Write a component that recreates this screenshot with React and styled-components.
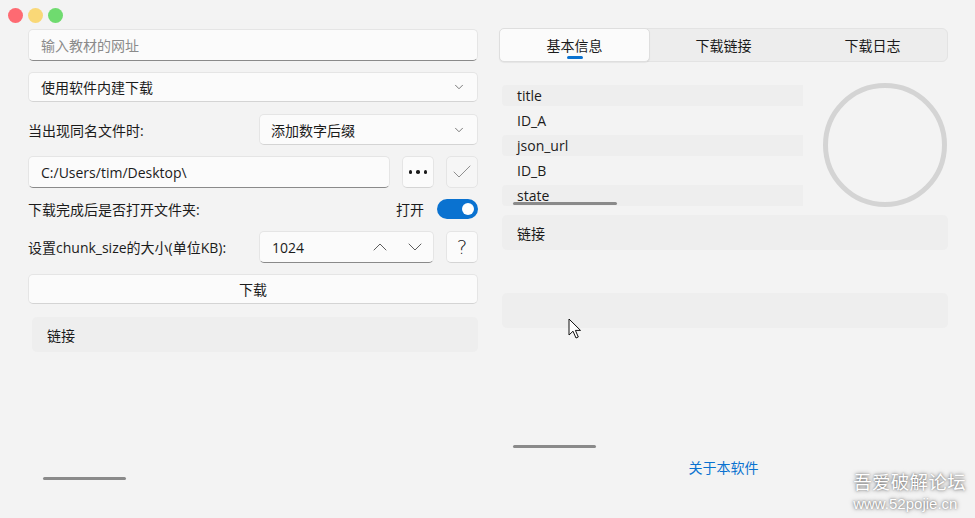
import React from 'react'
import styled, { createGlobalStyle } from 'styled-components'
import { ChevronDown, ChevronUp, Check } from 'lucide-react'

const Global = createGlobalStyle`
  html, body { margin: 0; padding: 0; background: #f3f3f3; }
  body { font-family: "Open Sans", "Noto Sans CJK SC", sans-serif; color: #1b1b1b; }
`;

const Window = styled.div`
  width: 975px;
  height: 518px;
  background: #f3f3f3;
  position: relative;
  overflow: hidden;
  display: flex;
  flex-direction: column;
  font-family: "Open Sans", "Noto Sans CJK SC", sans-serif;
  font-size: 14px;
`;

const TitleBar = styled.div`
  height: 28px;
  display: flex;
  gap: 5px;
  padding: 8px 0 0 8px;
  box-sizing: border-box;
`;

const Light = styled.span`
  width: 15px;
  height: 15px;
  border-radius: 50%;
  background: ${p => p.color};
`;

const Body = styled.div`
  display: flex;
  gap: 21px;
  padding-left: 28px;
`;

const LeftCol = styled.div`
  width: 450px;
  display: flex;
  flex-direction: column;
  padding-top: 1px;
`;

const RightCol = styled.div`
  width: 449px;
  display: flex;
  flex-direction: column;
`;

const Field = styled.div`
  height: ${p => p.h || 32}px;
  margin-top: ${p => p.mt || 0}px;
  flex: ${p => (p.grow ? 1 : 'none')};
  width: ${p => (p.w ? p.w + 'px' : 'auto')};
  box-sizing: border-box;
  background: #fbfbfb;
  border: 1px solid #e5e5e5;
  border-bottom-color: ${p => (p.edit ? '#8a8a8a' : '#d4d4d4')};
  border-radius: 5px;
  display: flex;
  align-items: center;
  padding: 0 ${p => p.pr ?? 12}px 0 ${p => p.pl ?? 12}px;
  color: ${p => (p.placeholder ? '#8b8b8b' : '#1b1b1b')};
`;

const Grow = styled.span`
  flex: 1;
`;

const Row = styled.div`
  display: flex;
  align-items: center;
  gap: ${p => p.gap || 0}px;
  height: ${p => p.h}px;
  margin-top: ${p => p.mt || 0}px;
`;

const Label = styled.span`
  flex: 1;
  white-space: nowrap;
`;

const SquareBtn = styled.div`
  width: 32px;
  height: 32px;
  box-sizing: border-box;
  background: ${p => (p.disabled ? '#f6f6f6' : '#fbfbfb')};
  border: 1px solid #e5e5e5;
  border-bottom-color: ${p => (p.disabled ? '#e5e5e5' : '#d4d4d4')};
  border-radius: 5px;
  display: flex;
  align-items: center;
  justify-content: center;
  font-size: 20px;
  font-family: "DejaVu Sans", sans-serif;
  font-weight: 200;
  color: ${p => (p.disabled ? '#8f8f8f' : '#1b1b1b')};
`;

const Dots = styled.span`
  display: flex;
  gap: 4px;
  & > i {
    width: 3.5px;
    height: 3.5px;
    border-radius: 50%;
    background: #1b1b1b;
  }
`;

const Toggle = styled.div`
  width: 41px;
  height: 20px;
  border-radius: 10px;
  background: #0a72d0;
  display: flex;
  align-items: center;
  justify-content: flex-end;
  padding-right: 4px;
  box-sizing: border-box;
  &::after {
    content: '';
    width: 12px;
    height: 12px;
    border-radius: 50%;
    background: #fff;
  }
`;

const Spin = styled.span`
  display: flex;
  gap: 11px;
  color: #5d5d5d;
  align-items: center;
`;

const Button = styled.div`
  height: 30px;
  margin-top: ${p => p.mt || 0}px;
  box-sizing: border-box;
  background: #fbfbfb;
  border: 1px solid #e5e5e5;
  border-bottom-color: #d4d4d4;
  border-radius: 5px;
  display: flex;
  align-items: center;
  justify-content: center;
`;

const Card = styled.div`
  height: 35px;
  margin: ${p => p.mt || 0}px 0 0 ${p => p.ml || 0}px;
  background: #eeeeee;
  border-radius: 5px;
  display: flex;
  align-items: center;
  padding-left: 15px;
`;

const ScrollLine = styled.div`
  width: ${p => p.w}px;
  height: 3px;
  border-radius: 2px;
  background: #8a8a8a;
  margin: ${p => p.mt}px 0 0 ${p => p.ml}px;
`;

const Tabs = styled.div`
  height: 34px;
  box-sizing: border-box;
  background: #ededed;
  border: 1px solid #e3e3e3;
  border-radius: 6px;
  display: flex;
`;

const Tab = styled.div`
  flex: 1;
  position: relative;
  display: flex;
  align-items: center;
  justify-content: center;
  border-radius: 5px;
  margin: -1px;
  background: ${p => (p.active ? '#fbfbfb' : 'transparent')};
  border: 1px solid ${p => (p.active ? '#dedede' : 'transparent')};
  box-shadow: ${p => (p.active ? '0 1px 1px rgba(0,0,0,0.06)' : 'none')};
  &::after {
    content: '';
    display: ${p => (p.active ? 'block' : 'none')};
    position: absolute;
    bottom: 2px;
    left: 50%;
    transform: translateX(-50%);
    width: 16px;
    height: 3px;
    border-radius: 2px;
    background: #0a72d0;
  }
`;

const InfoRow = styled.div`
  display: flex;
  gap: 20px;
  margin-top: 21px;
  padding-left: 3px;
`;

const Table = styled.div`
  width: 301px;
  margin-top: 2px;
  display: flex;
  flex-direction: column;
  gap: 4px;
  position: relative;
`;

const TRow = styled.div`
  height: 21px;
  border-radius: 4px 0 0 4px;
  background: ${p => (p.shade ? '#eeeeee' : 'transparent')};
  display: flex;
  align-items: center;
  padding-left: 15px;
`;

const HScroll = styled.div`
  position: absolute;
  left: 11px;
  bottom: 2px;
  width: 104px;
  height: 3px;
  border-radius: 2px;
  background: #8a8a8a;
`;

const Ring = styled.div`
  width: 124px;
  height: 124px;
  box-sizing: border-box;
  border-radius: 50%;
  border: 5px solid #d4d4d4;
`;

const About = styled.div`
  margin-top: 10px;
  text-align: center;
  color: #0a72d0;
  line-height: 20px;
`;

const Watermark = styled.div`
  position: absolute;
  right: 9px;
  bottom: 6px;
  color: #ffffff;
  text-shadow: 0 0 4px rgba(0, 0, 0, 0.55), 0 0 2px rgba(0, 0, 0, 0.35);
  font-family: "Noto Sans CJK SC", sans-serif;
  line-height: 1.1;
  & > div:first-child { font-size: 18.5px; letter-spacing: 0.3px; }
  & > div:last-child { font-size: 15px; margin-top: 4px; font-family: "Liberation Sans", sans-serif; }
`;

const Cursor = styled.svg`
  position: absolute;
  left: 568px;
  top: 318px;
`;

const rows = ['title', 'ID_A', 'json_url', 'ID_B', 'state']

export default function App() {
  return (
    <Window>
      <Global />
      <TitleBar>
        <Light color="#fe6a72" />
        <Light color="#f9d877" />
        <Light color="#6fdb6f" />
      </TitleBar>
      <Body>
        <LeftCol>
          <Field edit placeholder>输入教材的网址</Field>
          <Field h={30} mt={11} pr={11}>
            <Grow>使用软件内建下载</Grow>
            <ChevronDown size={14} strokeWidth={1.4} color="#5d5d5d" />
          </Field>
          <Row h={31} mt={12}>
            <Label>当出现同名文件时:</Label>
            <Field h={31} w={219} pl={11} pr={11}>
              <Grow>添加数字后缀</Grow>
              <ChevronDown size={14} strokeWidth={1.4} color="#5d5d5d" />
            </Field>
          </Row>
          <Row h={32} mt={11} gap={12}>
            <Field edit grow>C:/Users/tim/Desktop\</Field>
            <SquareBtn><Dots><i /><i /><i /></Dots></SquareBtn>
            <SquareBtn disabled><Check size={24} strokeWidth={1} /></SquareBtn>
          </Row>
          <Row h={20} mt={11}>
            <Label>下载完成后是否打开文件夹:</Label>
            <span style={{ marginRight: 13 }}>打开</span>
            <Toggle />
          </Row>
          <Row h={32} mt={12} gap={12}>
            <Label>设置chunk_size的大小(单位KB):</Label>
            <Field edit w={175} pl={12} pr={6}>
              <Grow>1024</Grow>
              <Spin>
                <ChevronUp size={24} strokeWidth={1} />
                <ChevronDown size={24} strokeWidth={1} />
              </Spin>
            </Field>
            <SquareBtn>?</SquareBtn>
          </Row>
          <Button mt={11}>下载</Button>
          <Card mt={13} ml={4}>链接</Card>
          <ScrollLine w={83} mt={125} ml={15} />
        </LeftCol>
        <RightCol>
          <Tabs>
            <Tab active>基本信息</Tab>
            <Tab>下载链接</Tab>
            <Tab>下载日志</Tab>
          </Tabs>
          <InfoRow>
            <Table>
              {rows.map((r, i) => (
                <TRow key={r} shade={i % 2 === 0}>{r}</TRow>
              ))}
              <HScroll />
            </Table>
            <Ring />
          </InfoRow>
          <Card mt={8} ml={3}>链接</Card>
          <Card mt={43} ml={3} />
          <ScrollLine w={83} mt={117} ml={14} />
          <About>关于本软件</About>
        </RightCol>
      </Body>
      <Cursor width="14" height="22" viewBox="0 0 14 22">
        <path d="M1 1 L1 17 L5 13.2 L8 20 L10.3 19 L7.4 12.4 L12.5 12.4 Z" fill="#fff" stroke="#111" strokeWidth="1" strokeLinejoin="round" />
      </Cursor>
      <Watermark>
        <div>吾爱破解论坛</div>
        <div>www.52pojie.cn</div>
      </Watermark>
    </Window>
  )
}
